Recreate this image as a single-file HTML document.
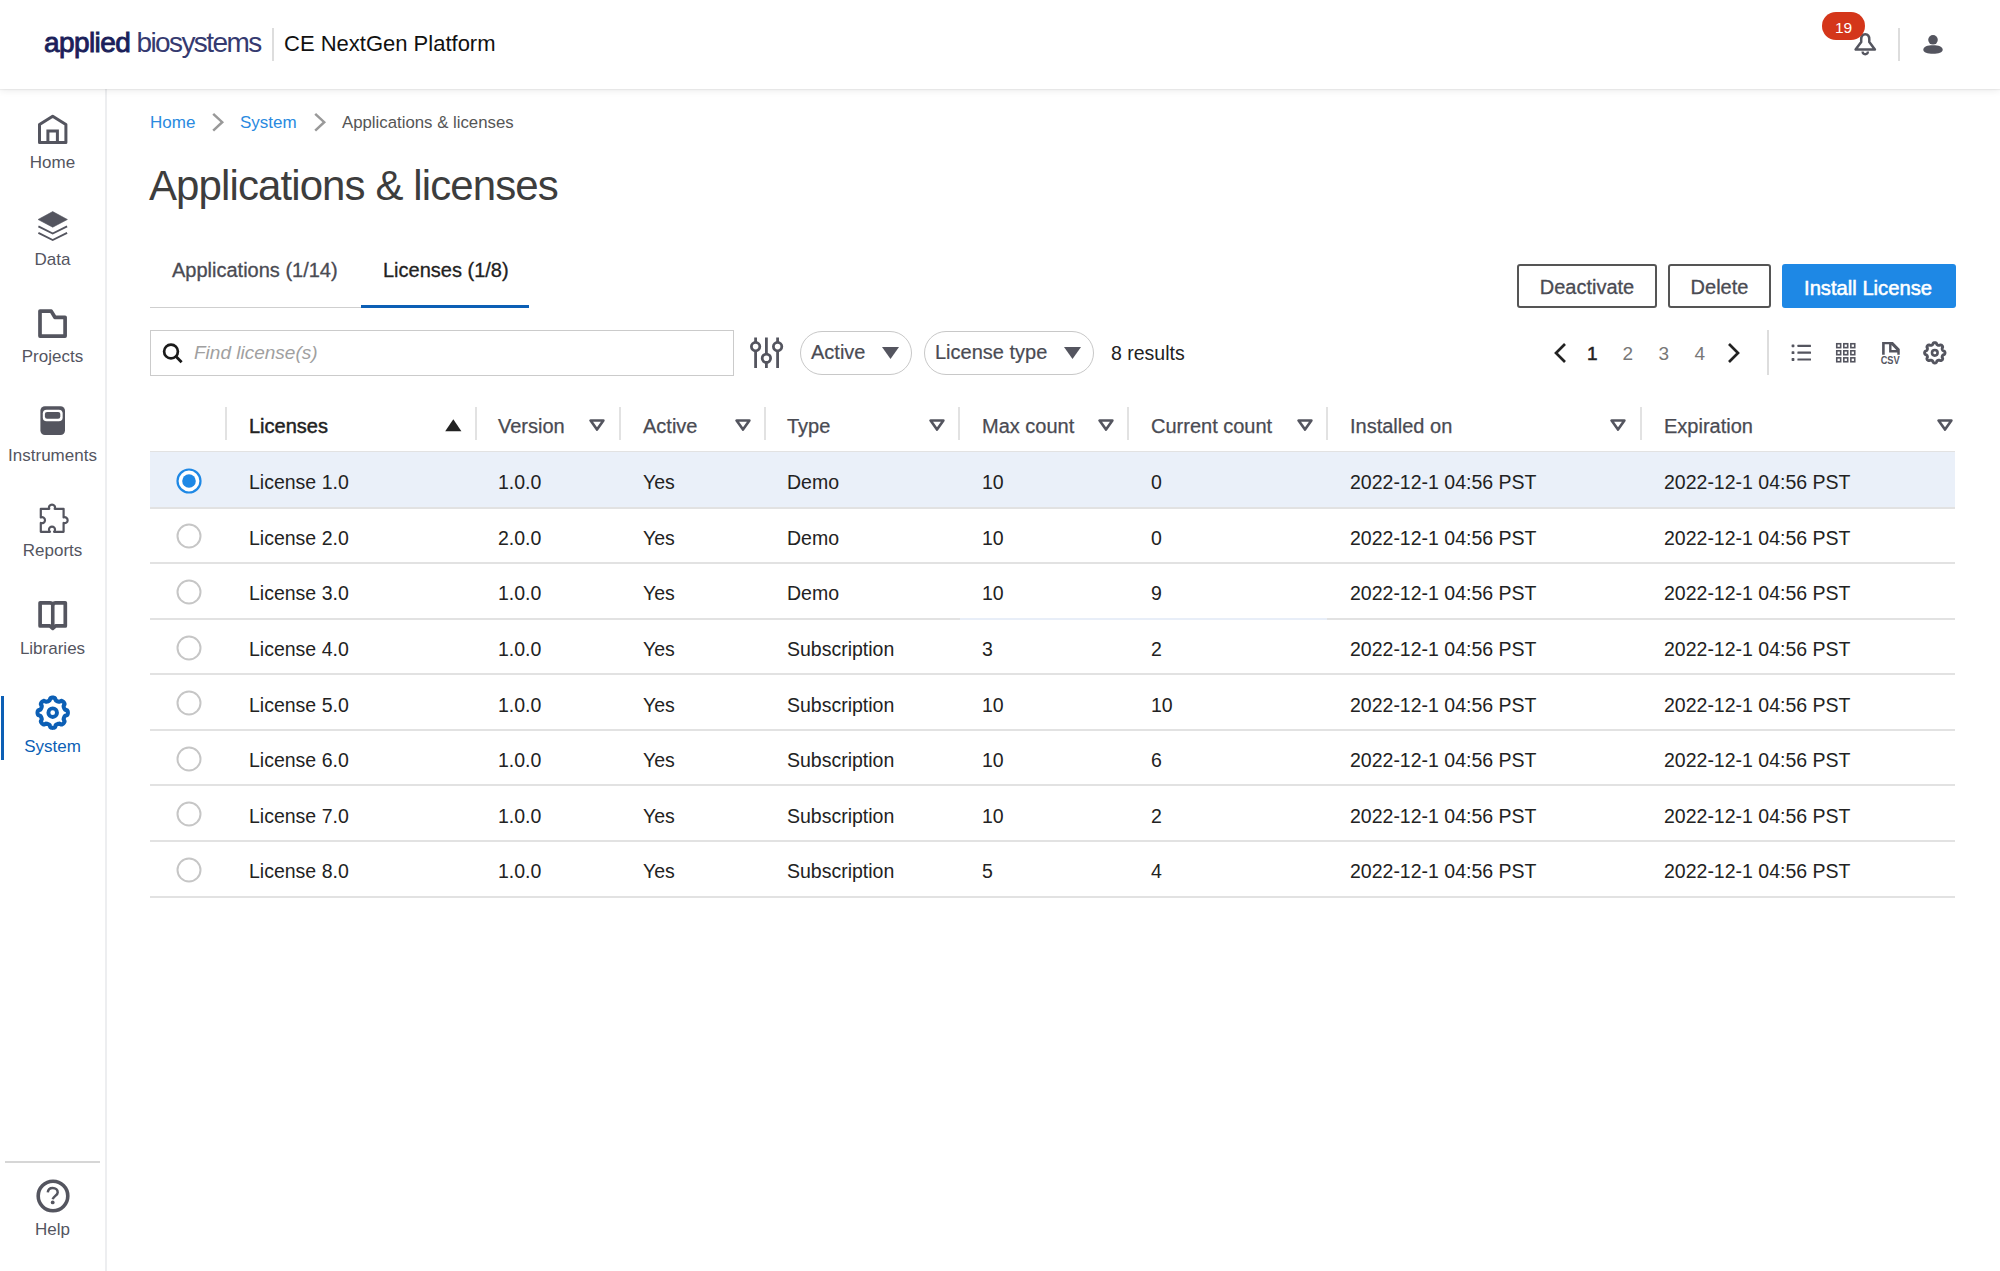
<!DOCTYPE html><html><head><meta charset="utf-8"><style>
*{margin:0;padding:0;box-sizing:border-box}
html,body{width:2000px;height:1271px;overflow:hidden;background:#fff;font-family:"Liberation Sans",sans-serif;color:#222}
.a{position:absolute;white-space:nowrap}
.hdr{position:absolute;left:0;top:0;width:2000px;height:89px;background:#fff;box-shadow:0 1px 1px rgba(0,0,0,0.05),0 2px 7px rgba(0,0,0,0.07);z-index:5}
.side{position:absolute;left:0;top:89px;width:107px;height:1182px;background:#fff;border-right:2px solid #edeef0}
.nl{position:absolute;left:0;width:105px;text-align:center;font-size:17px;color:#54555f;white-space:nowrap}
.bc{font-size:17px}
.cell{position:absolute;font-size:19.5px;color:#222;white-space:nowrap}
.hcell{position:absolute;font-size:20px;color:#4a4b53;white-space:nowrap}
.sep{position:absolute;top:407px;width:1.6px;height:33px;background:#e2e2e2}
.rb{position:absolute;left:150px;width:1805px;height:2px;background:#e2e2e2}
</style></head><body><div class="hdr">
<div class="a" style="left:44px;top:26.5px;font-size:28px;letter-spacing:-0.6px;color:#1b1f5a;-webkit-text-stroke:0.9px #1b1f5a">applied</div>
<div class="a" style="left:136.5px;top:26.5px;font-size:28px;letter-spacing:-1.6px;color:#353a70">biosystems</div>
<div class="a" style="left:272px;top:28px;width:2px;height:33px;background:#ddd"></div>
<div class="a" style="left:284px;top:30.5px;font-size:22px;color:#111">CE NextGen Platform</div>
<svg class="a" style="left:1850px;top:30px" width="30" height="30" viewBox="0 0 30 30"><path d="M15.25 4.2 C12.3 4.2 11.2 6.5 11.2 9.5 L11.2 12 L5.6 19.5 L24.9 19.5 L19.3 12 L19.3 9.5 C19.3 6.5 18.2 4.2 15.25 4.2 Z" fill="none" stroke="#54555f" stroke-width="2.5" stroke-linejoin="round"/><path d="M12.6 21.6 a2.65 2.65 0 0 0 5.3 0" fill="none" stroke="#54555f" stroke-width="2.3"/></svg>
<div class="a" style="left:1822px;top:12px;width:43px;height:28px;border-radius:14px;background:#d4361a;color:#fff;font-size:15.5px;text-align:center;line-height:32px">19</div>
<div class="a" style="left:1898px;top:28px;width:2px;height:33px;background:#ddd"></div>
<svg class="a" style="left:1921px;top:33px" width="24" height="24" viewBox="0 0 24 24"><circle cx="12" cy="6.8" r="4.8" fill="#54555f"/><path d="M2.3 16.8 C2.3 13.5 6.5 12.2 12 12.2 C17.5 12.2 21.7 13.5 21.7 16.8 C21.7 19.5 17.5 20.8 12 20.8 C6.5 20.8 2.3 19.5 2.3 16.8 Z" fill="#54555f"/></svg>
</div>
<div class="side"></div>
<div class="nl" style="top:152.8px;color:#54555f">Home</div>
<div class="nl" style="top:249.5px;color:#54555f">Data</div>
<div class="nl" style="top:347.1px;color:#54555f">Projects</div>
<div class="nl" style="top:445.5px;color:#54555f">Instruments</div>
<div class="nl" style="top:541.3px;color:#54555f">Reports</div>
<div class="nl" style="top:638.8px;color:#54555f">Libraries</div>
<div class="nl" style="top:736.6px;color:#0c5fb5">System</div>
<svg class="a" style="left:37px;top:114px" width="31" height="31" viewBox="0 0 31 31"><path d="M2.5 28.5 V10.6 L15.7 2.2 L28.9 10.6 V28.5 Z" fill="none" stroke="#54555f" stroke-width="3" stroke-linejoin="round"/><path d="M10.9 28.5 V17.1 H20.4 V28.5" fill="none" stroke="#54555f" stroke-width="3"/></svg>
<svg class="a" style="left:37px;top:210px" width="31" height="32" viewBox="0 0 31 32"><path d="M15.7 1.6 L30.4 9.5 L15.7 17.2 L1.1 9.5 Z" fill="#54555f" stroke="#54555f" stroke-width="0.6" stroke-linejoin="round"/><path d="M1.4 16.4 L15.7 23.5 L30.1 16.4" fill="none" stroke="#54555f" stroke-width="1.9"/><path d="M1.4 22.9 L15.7 30.0 L30.1 22.9" fill="none" stroke="#54555f" stroke-width="1.9"/></svg>
<svg class="a" style="left:37px;top:308px" width="31" height="31" viewBox="0 0 31 31"><path d="M3 28.1 V3.1 H14.2 L17.9 9.3 H28.1 V28.1 Z" fill="none" stroke="#54555f" stroke-width="3.7" stroke-linejoin="round"/></svg>
<svg class="a" style="left:39px;top:405px" width="27" height="31" viewBox="0 0 27 31"><rect x="1.4" y="1.2" width="24.6" height="28.9" rx="4.5" fill="#54555f"/><rect x="3.8" y="4.75" width="19.85" height="11.45" rx="3.8" fill="#fff"/><rect x="5.9" y="6.9" width="15.4" height="6.9" rx="2.2" fill="#54555f"/></svg>
<svg class="a" style="left:38px;top:500px" width="36" height="36" viewBox="0 0 36 36"><path d="M2.8 8.8 H11.27 A3 3 0 1 1 16.73 8.8 H25.6 V17.39 A3 3 0 1 1 25.6 23.01 V31.8 H16.04 A3 3 0 1 0 11.96 31.8 H2.8 V22.95 A3 3 0 1 0 2.8 17.45 Z" fill="none" stroke="#54555f" stroke-width="2.2" stroke-linejoin="round"/></svg>
<svg class="a" style="left:37px;top:600px" width="32" height="32" viewBox="0 0 32 32"><path d="M3.1 2.8 H13 C14.3 2.8 15.75 3.6 15.75 4.6 C15.75 3.6 17.2 2.8 18.5 2.8 H28.3 V25.9 H18.6 L15.75 28.4 L12.9 25.9 H3.1 Z" fill="none" stroke="#54555f" stroke-width="3.7" stroke-linejoin="round"/><path d="M15.75 4.5 V28" stroke="#54555f" stroke-width="3.6"/></svg>
<svg class="a" style="left:35px;top:695px" width="36" height="36" viewBox="0 0 36 36"><path d="M17.70 2.55 L18.29 2.59 L18.88 2.70 L19.45 2.89 L20.00 3.20 L20.38 4.21 L20.69 5.23 L21.12 5.58 L21.55 5.86 L21.98 6.09 L22.43 6.29 L22.88 6.46 L23.35 6.61 L23.85 6.72 L24.40 6.77 L25.34 6.27 L26.33 5.83 L26.93 5.99 L27.47 6.26 L27.97 6.59 L28.41 6.99 L28.81 7.43 L29.14 7.93 L29.41 8.47 L29.57 9.07 L29.13 10.06 L28.63 11.00 L28.68 11.55 L28.79 12.05 L28.94 12.52 L29.11 12.97 L29.31 13.42 L29.54 13.85 L29.82 14.28 L30.17 14.71 L31.19 15.02 L32.20 15.40 L32.51 15.95 L32.70 16.52 L32.81 17.11 L32.85 17.70 L32.81 18.29 L32.70 18.88 L32.51 19.45 L32.20 20.00 L31.19 20.38 L30.17 20.69 L29.82 21.12 L29.54 21.55 L29.31 21.98 L29.11 22.43 L28.94 22.88 L28.79 23.35 L28.68 23.85 L28.63 24.40 L29.13 25.34 L29.57 26.33 L29.41 26.93 L29.14 27.47 L28.81 27.97 L28.41 28.41 L27.97 28.81 L27.47 29.14 L26.93 29.41 L26.33 29.57 L25.34 29.13 L24.40 28.63 L23.85 28.68 L23.35 28.79 L22.88 28.94 L22.43 29.11 L21.98 29.31 L21.55 29.54 L21.12 29.82 L20.69 30.17 L20.38 31.19 L20.00 32.20 L19.45 32.51 L18.88 32.70 L18.29 32.81 L17.70 32.85 L17.11 32.81 L16.52 32.70 L15.95 32.51 L15.40 32.20 L15.02 31.19 L14.71 30.17 L14.28 29.82 L13.85 29.54 L13.42 29.31 L12.97 29.11 L12.52 28.94 L12.05 28.79 L11.55 28.68 L11.00 28.63 L10.06 29.13 L9.07 29.57 L8.47 29.41 L7.93 29.14 L7.43 28.81 L6.99 28.41 L6.59 27.97 L6.26 27.47 L5.99 26.93 L5.83 26.33 L6.27 25.34 L6.77 24.40 L6.72 23.85 L6.61 23.35 L6.46 22.88 L6.29 22.43 L6.09 21.98 L5.86 21.55 L5.58 21.12 L5.23 20.69 L4.21 20.38 L3.20 20.00 L2.89 19.45 L2.70 18.88 L2.59 18.29 L2.55 17.70 L2.59 17.11 L2.70 16.52 L2.89 15.95 L3.20 15.40 L4.21 15.02 L5.23 14.71 L5.58 14.28 L5.86 13.85 L6.09 13.42 L6.29 12.97 L6.46 12.52 L6.61 12.05 L6.72 11.55 L6.77 11.00 L6.27 10.06 L5.83 9.07 L5.99 8.47 L6.26 7.93 L6.59 7.43 L6.99 6.99 L7.43 6.59 L7.93 6.26 L8.47 5.99 L9.07 5.83 L10.06 6.27 L11.00 6.77 L11.55 6.72 L12.05 6.61 L12.52 6.46 L12.97 6.29 L13.42 6.09 L13.85 5.86 L14.28 5.58 L14.71 5.23 L15.02 4.21 L15.40 3.20 L15.95 2.89 L16.52 2.70 L17.11 2.59 L17.70 2.55 Z" fill="none" stroke="#0c5fb5" stroke-width="4.1" stroke-linejoin="round"/><circle cx="17.7" cy="17.7" r="4.3" fill="none" stroke="#0c5fb5" stroke-width="3.9"/></svg>
<div class="a" style="left:1px;top:696px;width:3px;height:64px;background:#0c5fb5"></div>
<div class="a" style="left:5px;top:1161px;width:95px;height:2px;background:#d6d6d6"></div>
<svg class="a" style="left:35px;top:1178px" width="36" height="36" viewBox="0 0 36 36"><circle cx="18" cy="18" r="14.8" fill="none" stroke="#54555f" stroke-width="3.6"/><path d="M12.8 14.4 C13 11.6 14.9 10 17.7 10 C20.6 10 22.7 11.8 22.7 14.4 C22.7 17.3 18.4 18.2 17.7 21.3" fill="none" stroke="#54555f" stroke-width="2.5"/><circle cx="17.7" cy="24.4" r="1.9" fill="#54555f"/></svg>
<div class="nl" style="top:1220px">Help</div>
<div class="a bc" style="left:150px;top:113px;color:#2a8ae0">Home</div>
<svg class="a" style="left:211px;top:112px" width="14" height="20" viewBox="0 0 14 20"><path d="M2.2 1.8 L11.2 10.2 L2.2 18.6" fill="none" stroke="#999" stroke-width="2.5"/></svg>
<div class="a bc" style="left:240px;top:113px;color:#2a8ae0">System</div>
<svg class="a" style="left:313px;top:112px" width="14" height="20" viewBox="0 0 14 20"><path d="M2.2 1.8 L11.2 10.2 L2.2 18.6" fill="none" stroke="#999" stroke-width="2.5"/></svg>
<div class="a bc" style="left:342px;top:113.3px;color:#555;font-size:16.8px">Applications &amp; licenses</div>
<div class="a" style="left:149px;top:162px;font-size:42px;letter-spacing:-0.9px;color:#3d3d3d">Applications &amp; licenses</div>
<div class="a" style="left:172px;top:258.5px;font-size:20px;color:#4a4b53;-webkit-text-stroke:0.3px #4a4b53">Applications (1/14)</div>
<div class="a" style="left:383px;top:258.5px;font-size:20px;color:#222;-webkit-text-stroke:0.3px #222">Licenses (1/8)</div>
<div class="a" style="left:150px;top:307px;width:379px;height:1.2px;background:#cfcfcf"></div>
<div class="a" style="left:361px;top:305.3px;width:168px;height:3px;background:#0c5fb5"></div>
<div class="a" style="left:1517px;top:264px;width:140px;height:44px;border:2px solid #555;border-radius:3px;font-size:20px;color:#4a4b53;text-align:center;line-height:43px;-webkit-text-stroke:0.3px #4a4b53">Deactivate</div>
<div class="a" style="left:1668px;top:264px;width:103px;height:44px;border:2px solid #555;border-radius:3px;font-size:20px;color:#4a4b53;text-align:center;line-height:43px;-webkit-text-stroke:0.3px #4a4b53">Delete</div>
<div class="a" style="left:1782px;top:264px;width:174px;height:44px;background:#1e88e5;border-radius:3px;font-size:20.2px;color:#fff;text-align:center;line-height:48px;padding-right:2px;-webkit-text-stroke:0.55px #fff">Install License</div>
<div class="a" style="left:150px;top:330px;width:584px;height:46px;border:1.5px solid #cbcbcb"></div>
<svg class="a" style="left:161px;top:342px" width="24" height="24" viewBox="0 0 24 24"><circle cx="10" cy="9.5" r="6.9" fill="none" stroke="#1a1a1a" stroke-width="2.7"/><path d="M14.8 14.3 L20.6 20.2" stroke="#1a1a1a" stroke-width="2.9"/></svg>
<div class="a" style="left:194px;top:341.5px;font-size:19px;font-style:italic;color:#a0a0a0">Find license(s)</div>
<svg class="a" style="left:749px;top:336px" width="36" height="34" viewBox="0 0 36 34"><g stroke="#54555f" stroke-width="2.8" fill="none"><path d="M6.6 1.6 V6.4 M6.6 14.8 V31.9"/><circle cx="6.6" cy="10.6" r="4.2"/><path d="M17.4 1.6 V18.1 M17.4 26.5 V31.9"/><circle cx="17.4" cy="22.3" r="4.2"/><path d="M28.6 1.6 V6.4 M28.6 14.8 V31.9"/><circle cx="28.6" cy="10.6" r="4.2"/></g></svg>
<div class="a" style="left:800px;top:331px;width:112px;height:44px;border:1.5px solid #c8c8c8;border-radius:22px"></div>
<div class="a" style="left:811px;top:341px;font-size:20px;color:#4a4b53;-webkit-text-stroke:0.2px #4a4b53">Active</div>
<svg class="a" style="left:882px;top:347px" width="17" height="12" viewBox="0 0 17 12"><path d="M0 0 H17 L8.5 12 Z" fill="#54555f"/></svg>
<div class="a" style="left:924px;top:331px;width:170px;height:44px;border:1.5px solid #c8c8c8;border-radius:22px"></div>
<div class="a" style="left:935px;top:341px;font-size:20px;color:#4a4b53;-webkit-text-stroke:0.2px #4a4b53">License type</div>
<svg class="a" style="left:1064px;top:347px" width="17" height="12" viewBox="0 0 17 12"><path d="M0 0 H17 L8.5 12 Z" fill="#54555f"/></svg>
<div class="a" style="left:1111px;top:341.5px;font-size:19.5px;color:#222">8 results</div>
<svg class="a" style="left:1552px;top:342px" width="18" height="22" viewBox="0 0 18 22"><path d="M13 2 L4 11 L13 20" fill="none" stroke="#222" stroke-width="2.7"/></svg>
<div class="a" style="left:1587px;top:342.5px;font-size:19px;color:#222;-webkit-text-stroke:0.5px #222">1</div>
<div class="a" style="left:1622.5px;top:342.5px;font-size:19px;color:#777">2</div>
<div class="a" style="left:1658.5px;top:342.5px;font-size:19px;color:#777">3</div>
<div class="a" style="left:1694.5px;top:342.5px;font-size:19px;color:#777">4</div>
<svg class="a" style="left:1724px;top:342px" width="18" height="22" viewBox="0 0 18 22"><path d="M5 2 L14 11 L5 20" fill="none" stroke="#222" stroke-width="2.7"/></svg>
<div class="a" style="left:1767px;top:330px;width:2px;height:45px;background:#ddd"></div>
<svg class="a" style="left:1790px;top:343px" width="22" height="20" viewBox="0 0 22 20"><g fill="#54555f"><rect x="1.6" y="1.4" width="2.8" height="2.8" rx="0.6"/><rect x="7.4" y="1.8" width="13.6" height="2.2" rx="0.4"/><rect x="1.6" y="8.3" width="2.8" height="2.8" rx="0.6"/><rect x="7.4" y="8.6" width="13.6" height="2.2" rx="0.4"/><rect x="1.6" y="15.1" width="2.8" height="2.8" rx="0.6"/><rect x="7.4" y="15.4" width="13.6" height="2.2" rx="0.4"/></g></svg>
<svg class="a" style="left:1835px;top:342px" width="22" height="22" viewBox="0 0 22 22"><rect x="1.75" y="1.75" width="3.9" height="3.9" fill="none" stroke="#54555f" stroke-width="1.6"/><rect x="8.80" y="1.75" width="3.9" height="3.9" fill="none" stroke="#54555f" stroke-width="1.6"/><rect x="15.85" y="1.75" width="3.9" height="3.9" fill="none" stroke="#54555f" stroke-width="1.6"/><rect x="1.75" y="8.80" width="3.9" height="3.9" fill="none" stroke="#54555f" stroke-width="1.6"/><rect x="8.80" y="8.80" width="3.9" height="3.9" fill="none" stroke="#54555f" stroke-width="1.6"/><rect x="15.85" y="8.80" width="3.9" height="3.9" fill="none" stroke="#54555f" stroke-width="1.6"/><rect x="1.75" y="15.85" width="3.9" height="3.9" fill="none" stroke="#54555f" stroke-width="1.6"/><rect x="8.80" y="15.85" width="3.9" height="3.9" fill="none" stroke="#54555f" stroke-width="1.6"/><rect x="15.85" y="15.85" width="3.9" height="3.9" fill="none" stroke="#54555f" stroke-width="1.6"/></svg>
<svg class="a" style="left:1879px;top:341px" width="23" height="24" viewBox="0 0 23 24"><path fill-rule="evenodd" d="M3.1 13.7 V0.9 H13.9 L20.75 7.9 V13.7 H18.3 V11.6 H10.1 V3.2 H5.7 V13.7 Z M12.5 3.9 V9.0 H17.3 Z" fill="#54555f"/><text x="11.2" y="22.9" font-family="Liberation Sans" font-size="11" font-weight="bold" fill="#54555f" text-anchor="middle" textLength="19" lengthAdjust="spacingAndGlyphs">CSV</text></svg>
<svg class="a" style="left:1922px;top:340px" width="26" height="26" viewBox="0 0 26 26"><path d="M12.80 2.60 L13.20 2.64 L13.59 2.74 L13.97 2.92 L14.32 3.20 L14.59 3.78 L14.83 4.36 L15.09 4.66 L15.37 4.90 L15.65 5.08 L15.94 5.22 L16.24 5.33 L16.57 5.40 L16.93 5.42 L17.33 5.40 L17.91 5.15 L18.52 4.93 L18.96 4.99 L19.35 5.13 L19.71 5.33 L20.01 5.59 L20.27 5.89 L20.47 6.25 L20.61 6.64 L20.67 7.08 L20.45 7.69 L20.20 8.27 L20.18 8.67 L20.20 9.03 L20.27 9.36 L20.38 9.66 L20.52 9.95 L20.70 10.23 L20.94 10.51 L21.24 10.77 L21.82 11.01 L22.40 11.28 L22.68 11.63 L22.86 12.01 L22.96 12.40 L23.00 12.80 L22.96 13.20 L22.86 13.59 L22.68 13.97 L22.40 14.32 L21.82 14.59 L21.24 14.83 L20.94 15.09 L20.70 15.37 L20.52 15.65 L20.38 15.94 L20.27 16.24 L20.20 16.57 L20.18 16.93 L20.20 17.33 L20.45 17.91 L20.67 18.52 L20.61 18.96 L20.47 19.35 L20.27 19.71 L20.01 20.01 L19.71 20.27 L19.35 20.47 L18.96 20.61 L18.52 20.67 L17.91 20.45 L17.33 20.20 L16.93 20.18 L16.57 20.20 L16.24 20.27 L15.94 20.38 L15.65 20.52 L15.37 20.70 L15.09 20.94 L14.83 21.24 L14.59 21.82 L14.32 22.40 L13.97 22.68 L13.59 22.86 L13.20 22.96 L12.80 23.00 L12.40 22.96 L12.01 22.86 L11.63 22.68 L11.28 22.40 L11.01 21.82 L10.77 21.24 L10.51 20.94 L10.23 20.70 L9.95 20.52 L9.66 20.38 L9.36 20.27 L9.03 20.20 L8.67 20.18 L8.27 20.20 L7.69 20.45 L7.08 20.67 L6.64 20.61 L6.25 20.47 L5.89 20.27 L5.59 20.01 L5.33 19.71 L5.13 19.35 L4.99 18.96 L4.93 18.52 L5.15 17.91 L5.40 17.33 L5.42 16.93 L5.40 16.57 L5.33 16.24 L5.22 15.94 L5.08 15.65 L4.90 15.37 L4.66 15.09 L4.36 14.83 L3.78 14.59 L3.20 14.32 L2.92 13.97 L2.74 13.59 L2.64 13.20 L2.60 12.80 L2.64 12.40 L2.74 12.01 L2.92 11.63 L3.20 11.28 L3.78 11.01 L4.36 10.77 L4.66 10.51 L4.90 10.23 L5.08 9.95 L5.22 9.66 L5.33 9.36 L5.40 9.03 L5.42 8.67 L5.40 8.27 L5.15 7.69 L4.93 7.08 L4.99 6.64 L5.13 6.25 L5.33 5.89 L5.59 5.59 L5.89 5.33 L6.25 5.13 L6.64 4.99 L7.08 4.93 L7.69 5.15 L8.27 5.40 L8.67 5.42 L9.03 5.40 L9.36 5.33 L9.66 5.22 L9.95 5.08 L10.23 4.90 L10.51 4.66 L10.77 4.36 L11.01 3.78 L11.28 3.20 L11.63 2.92 L12.01 2.74 L12.40 2.64 L12.80 2.60 Z" fill="none" stroke="#54555f" stroke-width="2.9" stroke-linejoin="round"/><circle cx="12.8" cy="12.8" r="2.8" fill="none" stroke="#54555f" stroke-width="2.6"/></svg>
<div class="sep" style="left:225px"></div>
<div class="sep" style="left:475px"></div>
<div class="sep" style="left:619px"></div>
<div class="sep" style="left:764px"></div>
<div class="sep" style="left:958px"></div>
<div class="sep" style="left:1127px"></div>
<div class="sep" style="left:1326px"></div>
<div class="sep" style="left:1640px"></div>
<div class="hcell" style="left:249px;top:414.9px;color:#222;font-size:20px;-webkit-text-stroke:0.45px #222">Licenses</div>
<div class="hcell" style="left:498px;top:414.9px;-webkit-text-stroke:0.25px #4a4b53">Version</div>
<div class="hcell" style="left:643px;top:414.9px;-webkit-text-stroke:0.25px #4a4b53">Active</div>
<div class="hcell" style="left:787px;top:414.9px;-webkit-text-stroke:0.25px #4a4b53">Type</div>
<div class="hcell" style="left:982px;top:414.9px;-webkit-text-stroke:0.25px #4a4b53">Max count</div>
<div class="hcell" style="left:1151px;top:414.9px;-webkit-text-stroke:0.25px #4a4b53">Current count</div>
<div class="hcell" style="left:1350px;top:414.9px;-webkit-text-stroke:0.25px #4a4b53">Installed on</div>
<div class="hcell" style="left:1664px;top:414.9px;-webkit-text-stroke:0.25px #4a4b53">Expiration</div>
<svg class="a" style="left:444.5px;top:418.5px" width="17" height="13" viewBox="0 0 17 13"><path d="M8.3 0.3 L16.4 12.2 H0.2 Z" fill="#222"/></svg>
<svg class="a" style="left:589px;top:419px" width="16" height="13" viewBox="0 0 16 13"><path d="M1.6 1.5 H14.4 L8 10.6 Z" fill="none" stroke="#54555f" stroke-width="2.6" stroke-linejoin="round"/></svg>
<svg class="a" style="left:734.5px;top:419px" width="16" height="13" viewBox="0 0 16 13"><path d="M1.6 1.5 H14.4 L8 10.6 Z" fill="none" stroke="#54555f" stroke-width="2.6" stroke-linejoin="round"/></svg>
<svg class="a" style="left:929px;top:419px" width="16" height="13" viewBox="0 0 16 13"><path d="M1.6 1.5 H14.4 L8 10.6 Z" fill="none" stroke="#54555f" stroke-width="2.6" stroke-linejoin="round"/></svg>
<svg class="a" style="left:1098px;top:419px" width="16" height="13" viewBox="0 0 16 13"><path d="M1.6 1.5 H14.4 L8 10.6 Z" fill="none" stroke="#54555f" stroke-width="2.6" stroke-linejoin="round"/></svg>
<svg class="a" style="left:1297px;top:419px" width="16" height="13" viewBox="0 0 16 13"><path d="M1.6 1.5 H14.4 L8 10.6 Z" fill="none" stroke="#54555f" stroke-width="2.6" stroke-linejoin="round"/></svg>
<svg class="a" style="left:1610px;top:419px" width="16" height="13" viewBox="0 0 16 13"><path d="M1.6 1.5 H14.4 L8 10.6 Z" fill="none" stroke="#54555f" stroke-width="2.6" stroke-linejoin="round"/></svg>
<svg class="a" style="left:1937px;top:419px" width="16" height="13" viewBox="0 0 16 13"><path d="M1.6 1.5 H14.4 L8 10.6 Z" fill="none" stroke="#54555f" stroke-width="2.6" stroke-linejoin="round"/></svg>
<div class="rb" style="top:451px"></div>
<div class="a" style="left:150px;top:452.0px;width:1805px;height:55.575px;background:#eaf0f9"></div>
<div class="rb" style="top:506.575px"></div>
<svg class="a" style="left:176px;top:467.7875px" width="26" height="26" viewBox="0 0 26 26"><circle cx="13" cy="13" r="11.5" fill="#fff" stroke="#1e88e5" stroke-width="2.2"/><circle cx="13" cy="13" r="6.8" fill="#1e88e5"/></svg>
<div class="cell" style="left:249px;top:471.2875px">License 1.0</div>
<div class="cell" style="left:498px;top:471.2875px">1.0.0</div>
<div class="cell" style="left:643px;top:471.2875px">Yes</div>
<div class="cell" style="left:787px;top:471.2875px">Demo</div>
<div class="cell" style="left:982px;top:471.2875px">10</div>
<div class="cell" style="left:1151px;top:471.2875px">0</div>
<div class="cell" style="left:1350px;top:471.2875px">2022-12-1 04:56 PST</div>
<div class="cell" style="left:1664px;top:471.2875px">2022-12-1 04:56 PST</div>
<div class="rb" style="top:562.15px"></div>
<svg class="a" style="left:176px;top:523.3625px" width="26" height="26" viewBox="0 0 26 26"><circle cx="13" cy="13" r="11.5" fill="#fff" stroke="#c6c6c6" stroke-width="2"/></svg>
<div class="cell" style="left:249px;top:526.8625px">License 2.0</div>
<div class="cell" style="left:498px;top:526.8625px">2.0.0</div>
<div class="cell" style="left:643px;top:526.8625px">Yes</div>
<div class="cell" style="left:787px;top:526.8625px">Demo</div>
<div class="cell" style="left:982px;top:526.8625px">10</div>
<div class="cell" style="left:1151px;top:526.8625px">0</div>
<div class="cell" style="left:1350px;top:526.8625px">2022-12-1 04:56 PST</div>
<div class="cell" style="left:1664px;top:526.8625px">2022-12-1 04:56 PST</div>
<div class="rb" style="top:617.725px"></div>
<div class="a" style="left:960px;top:617.725px;width:367px;height:2px;background:#e8eef8"></div>
<svg class="a" style="left:176px;top:578.9375px" width="26" height="26" viewBox="0 0 26 26"><circle cx="13" cy="13" r="11.5" fill="#fff" stroke="#c6c6c6" stroke-width="2"/></svg>
<div class="cell" style="left:249px;top:582.4375px">License 3.0</div>
<div class="cell" style="left:498px;top:582.4375px">1.0.0</div>
<div class="cell" style="left:643px;top:582.4375px">Yes</div>
<div class="cell" style="left:787px;top:582.4375px">Demo</div>
<div class="cell" style="left:982px;top:582.4375px">10</div>
<div class="cell" style="left:1151px;top:582.4375px">9</div>
<div class="cell" style="left:1350px;top:582.4375px">2022-12-1 04:56 PST</div>
<div class="cell" style="left:1664px;top:582.4375px">2022-12-1 04:56 PST</div>
<div class="rb" style="top:673.3000000000001px"></div>
<svg class="a" style="left:176px;top:634.5125px" width="26" height="26" viewBox="0 0 26 26"><circle cx="13" cy="13" r="11.5" fill="#fff" stroke="#c6c6c6" stroke-width="2"/></svg>
<div class="cell" style="left:249px;top:638.0125px">License 4.0</div>
<div class="cell" style="left:498px;top:638.0125px">1.0.0</div>
<div class="cell" style="left:643px;top:638.0125px">Yes</div>
<div class="cell" style="left:787px;top:638.0125px">Subscription</div>
<div class="cell" style="left:982px;top:638.0125px">3</div>
<div class="cell" style="left:1151px;top:638.0125px">2</div>
<div class="cell" style="left:1350px;top:638.0125px">2022-12-1 04:56 PST</div>
<div class="cell" style="left:1664px;top:638.0125px">2022-12-1 04:56 PST</div>
<div class="rb" style="top:728.875px"></div>
<svg class="a" style="left:176px;top:690.0875px" width="26" height="26" viewBox="0 0 26 26"><circle cx="13" cy="13" r="11.5" fill="#fff" stroke="#c6c6c6" stroke-width="2"/></svg>
<div class="cell" style="left:249px;top:693.5875px">License 5.0</div>
<div class="cell" style="left:498px;top:693.5875px">1.0.0</div>
<div class="cell" style="left:643px;top:693.5875px">Yes</div>
<div class="cell" style="left:787px;top:693.5875px">Subscription</div>
<div class="cell" style="left:982px;top:693.5875px">10</div>
<div class="cell" style="left:1151px;top:693.5875px">10</div>
<div class="cell" style="left:1350px;top:693.5875px">2022-12-1 04:56 PST</div>
<div class="cell" style="left:1664px;top:693.5875px">2022-12-1 04:56 PST</div>
<div class="rb" style="top:784.45px"></div>
<svg class="a" style="left:176px;top:745.6625px" width="26" height="26" viewBox="0 0 26 26"><circle cx="13" cy="13" r="11.5" fill="#fff" stroke="#c6c6c6" stroke-width="2"/></svg>
<div class="cell" style="left:249px;top:749.1625px">License 6.0</div>
<div class="cell" style="left:498px;top:749.1625px">1.0.0</div>
<div class="cell" style="left:643px;top:749.1625px">Yes</div>
<div class="cell" style="left:787px;top:749.1625px">Subscription</div>
<div class="cell" style="left:982px;top:749.1625px">10</div>
<div class="cell" style="left:1151px;top:749.1625px">6</div>
<div class="cell" style="left:1350px;top:749.1625px">2022-12-1 04:56 PST</div>
<div class="cell" style="left:1664px;top:749.1625px">2022-12-1 04:56 PST</div>
<div class="rb" style="top:840.0250000000001px"></div>
<svg class="a" style="left:176px;top:801.2375000000001px" width="26" height="26" viewBox="0 0 26 26"><circle cx="13" cy="13" r="11.5" fill="#fff" stroke="#c6c6c6" stroke-width="2"/></svg>
<div class="cell" style="left:249px;top:804.7375000000001px">License 7.0</div>
<div class="cell" style="left:498px;top:804.7375000000001px">1.0.0</div>
<div class="cell" style="left:643px;top:804.7375000000001px">Yes</div>
<div class="cell" style="left:787px;top:804.7375000000001px">Subscription</div>
<div class="cell" style="left:982px;top:804.7375000000001px">10</div>
<div class="cell" style="left:1151px;top:804.7375000000001px">2</div>
<div class="cell" style="left:1350px;top:804.7375000000001px">2022-12-1 04:56 PST</div>
<div class="cell" style="left:1664px;top:804.7375000000001px">2022-12-1 04:56 PST</div>
<div class="rb" style="top:895.6000000000001px"></div>
<svg class="a" style="left:176px;top:856.8125000000001px" width="26" height="26" viewBox="0 0 26 26"><circle cx="13" cy="13" r="11.5" fill="#fff" stroke="#c6c6c6" stroke-width="2"/></svg>
<div class="cell" style="left:249px;top:860.3125000000001px">License 8.0</div>
<div class="cell" style="left:498px;top:860.3125000000001px">1.0.0</div>
<div class="cell" style="left:643px;top:860.3125000000001px">Yes</div>
<div class="cell" style="left:787px;top:860.3125000000001px">Subscription</div>
<div class="cell" style="left:982px;top:860.3125000000001px">5</div>
<div class="cell" style="left:1151px;top:860.3125000000001px">4</div>
<div class="cell" style="left:1350px;top:860.3125000000001px">2022-12-1 04:56 PST</div>
<div class="cell" style="left:1664px;top:860.3125000000001px">2022-12-1 04:56 PST</div></body></html>
